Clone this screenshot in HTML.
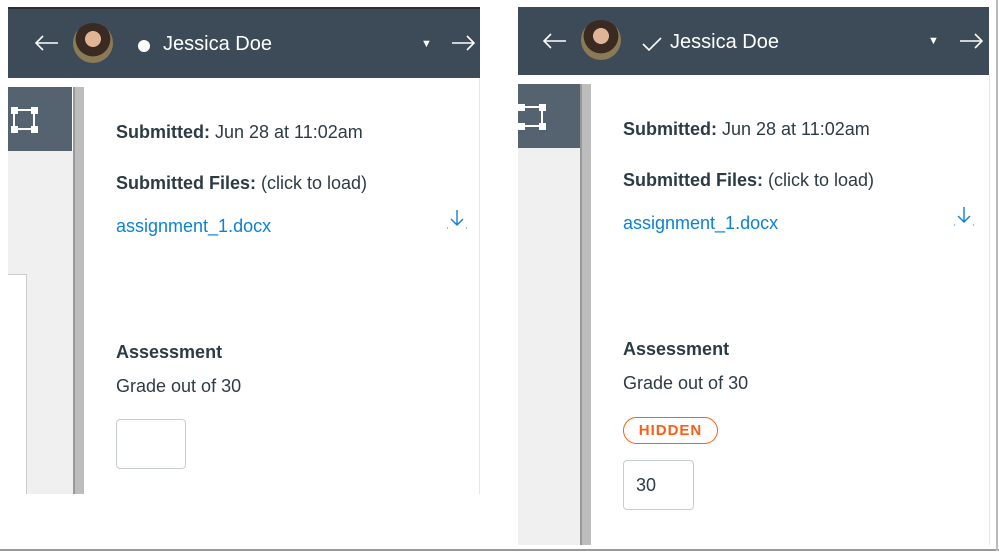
<!DOCTYPE html>
<html><head><style>
*{margin:0;padding:0;box-sizing:border-box}
body{width:999px;height:554px;background:#fff;position:relative;overflow:hidden;font-family:"Liberation Sans",sans-serif;color:#2d3b45}
.a{position:absolute}
.hdr{background:#3d4b58;color:#fff}
.t{position:absolute;font-size:18px;white-space:nowrap}
b{font-weight:bold}
.lnk{color:#0b82d4}
.sq{position:absolute;width:7px;height:7px;background:#fff}
</style></head><body>
<div class="a" style="left:0;top:549px;width:999px;height:2px;background:#999"></div>
<div class="a" style="left:996px;top:0;width:2px;height:551px;background:#bbb"></div>

<!-- LEFT PANEL -->
<div class="a" style="left:479px;top:78px;width:1px;height:416px;background:#e6e6e6"></div>
<div class="a hdr" style="left:8px;top:7px;width:472px;height:71px;border-top:2px solid #2a2f33"></div>
<svg class="a" style="left:35px;top:35px" width="24" height="16"><path d="M1 8H23M8 1L1 8L8 15" stroke="#fff" stroke-width="1.6" fill="none"/></svg>
<div class="a" style="left:73px;top:23px;width:40px;height:40px;border-radius:50%;background:radial-gradient(circle at 50% 40%,#e0b595 0 25%,#3a2a22 26% 55%,#8a7a55 56%)"></div>
<div class="a" style="left:138px;top:40px;width:12px;height:12px;border-radius:50%;background:#fff"></div>
<div class="t" style="left:163px;top:33px;color:#fff;font-size:20px">Jessica Doe</div>
<div class="t" style="left:421px;top:38px;color:#fff;font-size:11px">&#9660;</div>
<svg class="a" style="left:451px;top:35px" width="24" height="16"><path d="M1 8H23M16 1L23 8L16 15" stroke="#fff" stroke-width="1.6" fill="none"/></svg>
<div class="a" style="left:8px;top:87px;width:64px;height:64px;background:#556370"></div>
<div class="a" style="left:13px;top:109px;width:22px;height:21px;border:2px solid #fff"></div>
<div class="sq" style="left:11px;top:107px"></div><div class="sq" style="left:31px;top:107px"></div>
<div class="sq" style="left:11px;top:126px"></div><div class="sq" style="left:31px;top:126px"></div>
<div class="a" style="left:8px;top:151px;width:65px;height:343px;background:#f0f0f0"></div>
<div class="a" style="left:8px;top:274px;width:19px;height:220px;background:#fff;border-top:1px solid #ccc;border-right:1px solid #ccc"></div>
<div class="a" style="left:73px;top:87px;width:11px;height:407px;background:#bdbdbd;border-left:2px solid #999"></div>
<div class="t" style="left:116px;top:122px"><b>Submitted:</b> Jun 28 at 11:02am</div>
<div class="t" style="left:116px;top:173px"><b>Submitted Files:</b> (click to load)</div>
<div class="t lnk" style="left:116px;top:216px">assignment_1.docx</div>
<svg class="a" style="left:446px;top:208px" width="22" height="22"><path d="M11 2V17M5 11L11 17L17 11" stroke="#0b82d4" stroke-width="1.4" fill="none"/><path d="M1 20h1M20 20h1" stroke="#0b82d4"/></svg>
<div class="t" style="left:116px;top:342px"><b>Assessment</b></div>
<div class="t" style="left:116px;top:376px">Grade out of 30</div>
<div class="a" style="left:116px;top:419px;width:70px;height:50px;border:1px solid #c7cdd1;border-radius:4px"></div>

<!-- RIGHT PANEL -->
<div class="a" style="left:989px;top:75px;width:1px;height:470px;background:#e6e6e6"></div>
<div class="a hdr" style="left:518px;top:7px;width:471px;height:68px"></div>
<svg class="a" style="left:543px;top:33px" width="24" height="16"><path d="M1 8H23M8 1L1 8L8 15" stroke="#fff" stroke-width="1.6" fill="none"/></svg>
<div class="a" style="left:581px;top:20px;width:40px;height:40px;border-radius:50%;background:radial-gradient(circle at 50% 40%,#e0b595 0 25%,#3a2a22 26% 55%,#8a7a55 56%)"></div>
<svg class="a" style="left:642px;top:36px" width="20" height="16"><path d="M1 8L7 14L19 2" stroke="#fff" stroke-width="1.6" fill="none"/></svg>
<div class="t" style="left:670px;top:31px;color:#fff;font-size:20px">Jessica Doe</div>
<div class="t" style="left:928px;top:35px;color:#fff;font-size:11px">&#9660;</div>
<svg class="a" style="left:959px;top:33px" width="24" height="16"><path d="M1 8H23M16 1L23 8L16 15" stroke="#fff" stroke-width="1.6" fill="none"/></svg>
<div class="a" style="left:518px;top:84px;width:62px;height:64px;background:#556370"></div>
<div class="a" style="left:518px;top:106px;width:25px;height:21px;border:2px solid #fff;border-left:none"></div>
<div class="sq" style="left:518px;top:104px"></div><div class="sq" style="left:539px;top:104px"></div>
<div class="sq" style="left:518px;top:123px"></div><div class="sq" style="left:539px;top:123px"></div>
<div class="a" style="left:518px;top:148px;width:62px;height:397px;background:#f0f0f0"></div>
<div class="a" style="left:580px;top:84px;width:11px;height:461px;background:#bdbdbd;border-left:2px solid #999"></div>
<div class="t" style="left:623px;top:119px"><b>Submitted:</b> Jun 28 at 11:02am</div>
<div class="t" style="left:623px;top:170px"><b>Submitted Files:</b> (click to load)</div>
<div class="t lnk" style="left:623px;top:213px">assignment_1.docx</div>
<svg class="a" style="left:953px;top:205px" width="22" height="22"><path d="M11 2V17M5 11L11 17L17 11" stroke="#0b82d4" stroke-width="1.4" fill="none"/><path d="M1 20h1M20 20h1" stroke="#0b82d4"/></svg>
<div class="t" style="left:623px;top:339px"><b>Assessment</b></div>
<div class="t" style="left:623px;top:373px">Grade out of 30</div>
<div class="a" style="left:623px;top:417px;width:95px;height:27px;border:1px solid #fc5e13;border-radius:14px;color:#fc5e13;font-size:15px;font-weight:bold;letter-spacing:1px;text-align:center;line-height:25px">HIDDEN</div>
<div class="a" style="left:623px;top:460px;width:71px;height:50px;border:1px solid #c7cdd1;border-radius:4px;font-size:18px;line-height:48px;padding-left:12px">30</div>
</body></html>
